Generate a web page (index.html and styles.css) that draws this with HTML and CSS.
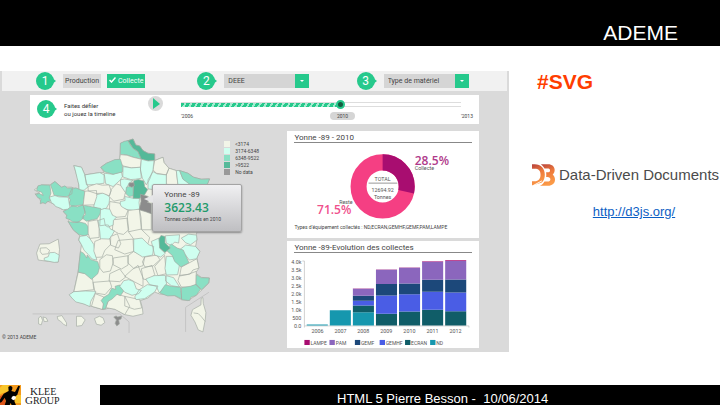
FILE: index.html
```html
<!DOCTYPE html>
<html lang="fr">
<head>
<meta charset="utf-8">
<meta name="viewport" content="width=device-width, initial-scale=1">
<title>ADEME</title>
<link rel="stylesheet" href="styles.css">
</head>
<body>
<header class="top"><h1>ADEME</h1></header>
<main class="content">
  <section class="dashboard">
    <div class="toolbar">
      <div class="group">
        <span class="badge">1</span>
        <button class="choice" type="button">Production</button>
        <button class="choice chosen" type="button"><svg class="tick" viewBox="0 0 14 12"><path d="M1 6l4 4 8-9"/></svg>Collecte</button>
      </div>
      <div class="group">
        <label class="badge" for="flux">2</label>
        <div class="picker"><select id="flux"><option>DEEE</option></select></div>
      </div>
      <div class="group">
        <label class="badge" for="type">3</label>
        <div class="picker"><select id="type"><option>Type de matériel</option></select></div>
      </div>
    </div>
    <div class="timeline">
      <span class="badge">4</span>
      <label class="hint" for="year">Faites défiler<br>ou jouez la timeline</label>
      <button class="play" type="button" aria-label="Lecture"><svg viewBox="0 0 15 15"><path d="M5 2l7 6-7 5z"/></svg></button>
      <div class="range">
        <input id="year" type="range" min="2006" max="2013" value="2010">
        <div class="ends"><span>'2006</span><output for="year">2010</output><span class="last">'2013</span></div>
      </div>
    </div>
    <div class="panels">
      <div class="mapbox">
        <svg class="map" viewBox="0 -15 864 681">
          <g class="dep">
            <path d="M362 40 385 32 400 27 408 45 420 48 430 62 445 70 465 72 465 92 490 82 493 98 508 115 530 122 540 122 565 130 582 142 605 148 630 147 622 165 610 240 590 315 592 330 588 350 600 365 592 385 598 415 588 430 605 443 630 445 628 460 608 480 590 497 565 513 545 510 525 498 480 493 465 487 445 505 422 513 428 535 430 553 400 560 375 555 350 540 330 535 310 540 275 530 228 515 210 497 222 485 235 425 242 365 245 345 236 330 240 318 220 300 205 275 210 268 190 245 208 238 185 238 160 222 145 215 125 220 118 205 105 192 120 190 103 180 125 165 150 165 165 155 185 172 215 172 238 180 235 150 222 107 245 112 255 135 300 128 313 128 303 112 320 100 360 88z"/>
            <path class="m" d="M362 40l12-6 11-2 6 12 9 11 15 10 10 23-25-6-18-7-20-1z"/>
            <path class="d" d="M385 32l15-5 8 18 12 3 10 14 15 8 20 2v20l-20 1-20-5-10-23-15-10z"/>
            <path d="M362 74l20 2 18 6 25 6-3 24-27 2-25-6-12-13zM465 92l25-10 3 16 15 17-8 20-30-5-10-10zM508 115l22 7 5 43-20 10-15-15v-25z"/>
            <path class="l" d="M370 110l25 4 27-2 3 33-18 3-14 1-24-8zM425 88l20 5 18-1-3 28-10 28-10 17-12-20-6-25zM445 150l15-25 12 7 28 3v50l-55-8zM530 122h10l10 25 25 15v30h-35l-5-27zM313 130l27 3 25-7 3 14-6 10-22 20-22-8zM255 135l45-7 13 7v25l-28 4-25 1zM222 107l23 5 10 23 5 24 5 12-12 10-15 1-1-17-5-20-6-25zM290 195l20-6 20 11-2 20-8 15-15 5-23-8 1-20zM362 150l12-3 26 5-12 8-6 12-4 18-15-18zM362 215l14-3-1-12 25 5 20-2-2 15 2 20-14 5-24-4-22-6z"/>
            <path class="m" d="M540 122l25 8 17 12 23 6 25-1-8 20-25-2-15 7-32-24zM303 112l17-12 25-11 17-1 6 20v18l-28 7-25-7zM380 172l20-4 2 30-14 2-10-9zM125 165l25 1 3 24-5 15 7 8-14 3-4 6-9-4-7 4 2-15-9-3-7-10 11-3 12 6-5-10-15-5 4-14zM152 165l13-10 20 17 10-4 8 7 15-1-2 18-16 9-20-2-17-2zM215 178l13-4 12 5 15 5-2 20-3 21-35 4-7-7 3-12-5-10zM190 245l17-9 8-8 18 3 17-6 6 21-6 14 2 4-17 14-17-2-8-6-12-5 3-9zM250 226l26 5 27 5-1 14-10 17-32 7-14-10 11-10zM205 275l18 3 14-2 20 5 8 10 1 23-13 4-15-3-18-15z"/>
            <path d="M265 170l25-8 18 4 20-1 6 18-5 15-20-8-20 1-24-8zM255 184l35-2 1 18-8 25-33 1zM335 178l15-16 12 4 15 22-5 20-30 6-14-14zM265 275l28-5 5 25v28l-28 3-5-15zM330 215l30 5 5 10 20 12-8 18-35 3-13-20zM386 242l33-4 5 25 2 37-18 6-22-1-4-35zM340 270l43-5 4 35-16 14-15-3-18-10zM419 238l36 12v50h-30z"/>
            <path class="l" d="M302 240l12-4 16 2 8 18 12 6-9 10-1 14-15 6-10-6-15 2 1-20zM148 202l17-5 12 4 28 1 5 30-6 6-14 2-9-5-14-5-5-7-7-4zM295 272l18-6 3 19 10 1 6 12 12 5-9 17-10 11-23-2-2-24zM240 320l20-3 10 9 12 18 3 20 6 27-14-3-12-14-12-12-8-17-8-14z"/>
            <path d="M285 335l20-8 25 1 3 16-18 18-8 20-18 1-7-19zM333 320l20-8 10 30-7 13-24-9zM300 390l20-15 18 3 2 22-8 24-22 4-10-13zM235 428l27 4 16 14 4 34-60 7zM280 458l50-4 6 18-20 23-30-5zM286 492l26 10-2 38-35-10zM335 490l40 10 15 30-15 25-30-16-27-5zM375 500l45 10 6 25-22 4-29-10zM435 382l36-6 10 14-21 19-24 3-8-15zM385 378l17-13 33 17-5 26-28 8-17-16zM465 410l30-33 5 55-25 6zM425 417l32-10 8 28-15 17-20-4zM375 440l22-20 18-13 15 38v25l-25-13zM330 432l30-14 18 24-18 14-32-2zM340 385l45-7v28l-20 12-25-13zM355 332l45-4 2 37-27 8-30-13zM386 306l38-8 26 25-6 22-42-17zM545 412l23-12 24-13 6 28-18 6-8 12-32 6zM540 437l25-3 25-9v40l-20 8-25-1-10-19z"/>
            <path class="m" d="M242 365l10 6 9 14 1-9 12 14 20 6 5 18-5 18-19 17-20-17-20-5zM312 503l15-9 9-18 12 3-2-9 14-4 12 18-10 14-10-4-15 14-13 8-7 22h-9l3-15-7-10z"/>
            <path class="l" d="M208 495l14-9 35-2 31 1-6 14-9 16-3 16-18-8-24-6-12-12zM360 470l12-17 15-3 15 6 8 22 15 4-8 10-20 5-22-9zM402 328l25-3 20 20 15 5-3 26-30 6-27-17zM455 335l23-10 4 32 15 14-14 11-18-6zM497 318l43-3-3 25-12-3-10 10-15-7zM545 325l22-12 24 3 1 15-19 14-15-6zM540 360l18-14 30 4 13 15-10 22-22 4-12-16zM500 380h19l12 18 9 6-6 31-34 1-4-20zM500 438l22 6 18 28-25-4-17-14zM438 448l25-10 34-1 4 28-22 25-9-20-20-5zM405 502l14-22 24-15 32 4-10 18-30 20-26 3z"/>
            <path class="m" d="M498 360l17-17 18 12 18 6 17 38-24 13-19-17-7-18zM480 490l17-25 18 5 28 3 3 35-20-10-22 1zM545 474l27-4 18-6 13 15-13 18-16 6-4 10-24-3zM590 435l15 9 24 1-2 15-21 20-17-15z"/>
            <path class="d" d="M478 327l6-10 12 3v19l16 16-16 13-16-13zM402 152l14-3 16 4 3 17 9 9-10 17-16 10-18-1z"/>
            <path class="g" d="M388 159l14-1 2 10-8 4-9-4zM422 193l21 6 12 8-12 10 12 4v31l-19-7-18-5 6-26z"/>
          </g>
          <g class="dep">
            <path d="M110 370l10-27 28-1 27-14 4 31-4 38-30-2-30-4zM605 505l5-1 1 17 8 28-2 22-7 36-14-6-10-24-12-20 5-17 25-14zM116 565l7-5 5 12-4 14-8-3zM129 562l10 3 5 10-11 1zM172 561l14-3 14 22 0 9-9-5-8-8-9-6zM230 560h15l11 11-10 17-16 2zM284 567l15-7 11 5 5 14-11 8-14-3z"/>
            <path d="M121 355l18-1 10 8-4 10-18 2-6-8zM582 550l14 2 10 10 11 14"/>
            <path class="l" d="M133 385l12-4 4-12 15-1 14 8-3 21-12 1-30-6z"/>
            <path class="g" d="M342 562l7-3 5 3 12-3-2 9-7 3 2 12-8 6-5-8 4-10z"/>
          </g>
          <path class="frame" d="M98 553h262l28 24v33M558 607v-74l70-45"/>
        </svg>
        <ul class="legend">
          <li class="k1">&lt;3174</li><li class="k2">3174-6348</li><li class="k3">6348-9522</li><li class="k4">&gt;9522</li><li class="k5">No data</li>
        </ul>
        <div class="tip"><b>Yonne -89</b><strong>3623.43</strong><small>Tonnes collectés en 2010</small></div>
        <p class="copy">© 2013 ADEME</p>
      </div>
      <div class="cards">
        <article class="card">
          <h2>Yonne -89 - 2010</h2>
          <svg class="chart" viewBox="24 57 573 240">
            <g class="ring"><circle cx="310" cy="187" r="72" class="rest"/><circle cx="310" cy="187" r="72" pathLength="100" class="part" transform="rotate(-90 310 187)"/></g>
            <path class="rule" d="M268 177h86"/>
            <g class="mid"><text x="310" y="171">TOTAL</text><text x="310" y="204">12694.92</text><text x="310" y="224">Tonnes</text></g>
            <text class="big purple" x="406" y="122">28.5%</text><text x="406" y="139">Collecte</text>
            <text x="180" y="239">Reste</text><text class="big pink" x="114" y="269">71.5%</text>
          </svg>
          <p class="types">Types d'équipement collectés : ND,ECRAN,GEMHF,GEMF,PAM,LAMPE</p>
        </article>
        <article class="card">
          <h2>Yonne -89-Evolution des collectes</h2>
          <svg class="chart" viewBox="24 62 573 275">
            <path class="axis" d="M70 86h6v194h492v5M76 280v5"/>
            <g class="ylab"><text x="67" y="95">4.0k</text><text x="67" y="119">3.5k</text><text x="67" y="142">3.0k</text><text x="67" y="166">2.5k</text><text x="67" y="190">2.0k</text><text x="67" y="214">1.5k</text><text x="67" y="238">1.0k</text><text x="67" y="261">500</text><text x="67" y="285">0.0</text></g>
            <g class="nd"><path d="M83 276h63v3H83zM152 233h63v46h-63zM221 239h63v40h-63z"/></g>
            <g class="ecran"><path d="M221 219h63v20h-63zM290 244h63v35h-63zM359 237h63v42h-63zM428 232h63v47h-63zM497 236h63v43h-63z"/></g>
            <g class="gemhf"><path d="M221 205h63v14h-63zM290 189h63v55h-63zM359 185h63v52h-63zM428 178h63v54h-63zM497 180h63v56h-63z"/></g>
            <g class="gemf"><path d="M221 190h63v15h-63zM290 155h63v34h-63zM359 153h63v32h-63zM428 142h63v36h-63zM497 141h63v39h-63z"/></g>
            <g class="pam"><path d="M221 169h63v21h-63zM290 112h63v43h-63zM359 106h63v47h-63zM428 88h63v54h-63zM497 86h63v55h-63z"/></g>
            <path class="lampe" d="M221 168h63v1h-63zM290 111h63v1h-63zM359 105h63v1h-63zM428 87h63v1h-63zM497 84h63v2h-63z"/>
            <g class="xlab"><text x="115" y="301">2006</text><text x="184" y="301">2007</text><text x="252" y="301">2008</text><text x="321" y="301">2009</text><text x="390" y="301">2010</text><text x="459" y="301">2011</text><text x="528" y="301">2012</text></g>
            <path class="lampe" d="M76 322h16v16H76z"/><path class="pam" d="M151 322h16v16h-16z"/><path class="gemf" d="M227 322h16v16h-16z"/><path class="gemhf" d="M301 322h16v16h-16z"/><path class="ecran" d="M377 322h16v16h-16z"/><path class="nd" d="M452 322h16v16h-16z"/>
            <g class="keys"><text x="94" y="336">LAMPE</text><text x="170" y="336">PAM</text><text x="245" y="336">GEMF</text><text x="319" y="336">GEMHF</text><text x="395" y="336">ECRAN</text><text x="470" y="336">ND</text></g>
          </svg>
        </article>
      </div>
    </div>
  </section>
  <aside class="side">
    <h2>#SVG</h2>
    <div class="d3">
      <svg viewBox="0 0 70 66">
        <defs><linearGradient id="warm" x1="0" y1="0" x2="0.3" y2="1"><stop offset="0" stop-color="#b5413c"/><stop offset=".5" stop-color="#ee7a3c"/><stop offset="1" stop-color="#fb9a47"/></linearGradient></defs>
        <path fill="url(#warm)" d="M0 0h8c20 0 31 14 31 32 0 10-3 18-9 24L2 65 0 66V52h8c12 0 18-8 18-20S20 14 8 14H0z"/>
        <path fill="url(#warm)" d="M27 0h22c12 0 20 7 20 18 0 6-3 11-6 14 4 3 7 8 7 15 0 12-9 19-21 19H24c7-3 11-7 14-13h9c6 0 9-3 9-7s-3-7-9-7h-4q1-7 0-14h4c5 0 8-2 8-6s-3-6-8-6h-9C35 8 32 4 27 0z"/>
        <path stroke="#fff" stroke-width="3" d="M0 67l30-16"/>
      </svg>
      <span>Data-Driven Documents</span>
    </div>
    <a href="http://d3js.org/">http://d3js.org/</a>
  </aside>
</main>
<footer class="bottom">
  <div class="klee">
    <svg viewBox="0 0 63 60"><path fill="#f39a1d" d="M0 0h63v60H0z"/><path fill="#f8c52c" d="M8 0h18v18L0 28V8zM42 30h21v24H46z"/><path fill="#dd5519" d="M0 34l14-8 4 34H0z"/><path d="M25 6q7-7 12 1 1 6-3 11l11 3 10-19 5 2-8 25-8 7-1 13 8 18H38l-6-13-8 16H11l7-22-4-10-9 13-5 2V44l11-18 15-8z"/><path fill="#fff" d="M36 35l6-3 6 4-2 7-6 3-6-5z"/></svg>
    <div class="name"><span>K<i>LEE</i></span><span>G<i>ROUP</i></span></div>
  </div>
  <p>HTML 5 Pierre Besson -&nbsp; 10/06/2014</p>
</footer>
</body>
</html>
```
FILE: styles.css
```css
* { box-sizing: border-box; margin: 0; padding: 0; }
body { min-height: 100vh; display: flex; flex-direction: column; background: #fff; font-family: "Liberation Sans", sans-serif; }
.top { background: #000; color: #fff; height: 46px; padding: 21px 42px 0; text-align: right; }
.top h1 { font-size: 21px; font-weight: 400; line-height: 24px; }
.content { flex: 1; display: grid; grid-template-columns: 509fr 211fr; align-items: start; padding-top: 25px; }

.dashboard { background: #dadada; color: #444; font-family: Roboto, sans-serif; font-size: 7px; line-height: 8px; }
button, select { font: inherit; color: inherit; border: 0; border-radius: 0; }
.toolbar { display: grid; grid-template-columns: 162fr 160fr 151fr; height: 20px; margin: 0 2px; padding-left: 34px; background: #f1f1f1; }
.group { display: flex; align-items: center; }
.badge { position: relative; flex: none; width: 18px; height: 18px; margin-right: 9px; border-radius: 50%; background: #26c98c; color: #fff; font-size: 12px; line-height: 18px; text-align: center; }
.badge::after { content: ""; position: absolute; left: 16px; top: 6px; border: solid transparent; border-width: 3px 0 3px 4px; border-left-color: #26c98c; }
.choice { height: 14px; padding: 0 2px; margin-right: 6px; background: #dadada; }
.chosen { background: #26c98c; color: #fff; }
.tick { width: 7px; height: 6px; margin-right: 2px; fill: none; stroke: #fff; stroke-width: 3; }
.picker { position: relative; flex: none; width: 85px; height: 14px; }
.picker select { display: block; width: 100%; height: 100%; padding: 0 4px; appearance: none; background: linear-gradient(to left, #26c98c 14px, #d5d5d5 14px); }
.picker::after { content: ""; position: absolute; right: 5px; top: 6px; border: 2px solid transparent; border-top-color: #fff; pointer-events: none; }

.timeline { display: flex; align-items: flex-start; height: 29px; margin: 4px 30px 0; padding: 0 18px 0 7px; background: #fff; }
.timeline .badge { margin-top: 5px; }
.hint { width: 84px; padding-top: 7px; font-size: 6px; color: #333; }
.play { width: 15px; height: 15px; margin: 1px 18px 0 0; border-radius: 50%; background: #dadada; }
.play svg { display: block; fill: #26c98c; }
.range { flex: 1; padding-top: 5px; }
.range input { display: block; width: 100%; height: 9px; appearance: none; background: linear-gradient(#fff, #fff) 100% 50% / 43% 3px no-repeat, repeating-linear-gradient(120deg, #26c98c 0 3px, #a5ecd0 3px 5px) 0 50% / 57% 4px no-repeat, linear-gradient(#ddd, #ddd) 0 50% / 100% 5px no-repeat; }
.range input::-webkit-slider-thumb { appearance: none; width: 9px; height: 9px; border: 2px solid #26c98c; border-radius: 50%; background: #145c40; }
.ends { display: grid; grid-template-columns: 149fr 25fr 106fr; font-size: 5px; padding-top: 3px; }
.ends output { border-radius: 4px; background: #d5d5d5; text-align: center; }
.ends .last { justify-self: end; margin-right: -12px; }

.panels { display: grid; grid-template-columns: 3fr 2fr; padding-right: 30px; }
.mapbox { position: relative; }
.map { display: block; width: 100%; margin-top: 1px; }
.dep path { fill: #f2f5e8; stroke: #a3aaa3; stroke-width: 2; stroke-linejoin: round; }
.dep .l { fill: #cffff0; }
.dep .m { fill: #89e0c4; }
.dep .d { fill: #55b999; }
.dep .g { fill: #8c8c8c; }
.frame { fill: none; stroke: #c4c4c4; stroke-width: 3; }
.legend { position: absolute; left: 78%; top: 17px; list-style: none; font-size: 5px; line-height: 7px; }
.legend li::before { content: ""; display: inline-block; width: 6px; height: 6px; margin-right: 5px; vertical-align: top; background: currentcolor; }
.k1::before { color: #f2f5e8; }
.k2::before { color: #cffff0; }
.k3::before { color: #89e0c4; }
.k4::before { color: #55b999; }
.k5::before { color: #999; }
.tip { position: absolute; left: 53%; top: 60px; width: 90px; height: 48px; padding: 5px 11px; border: 1px solid #a4a4a4; border-radius: 2px; background: linear-gradient(#f0f0f2, #bfbfc2); box-shadow: 0 1px 2px #888; white-space: nowrap; }
.tip::before { content: ""; position: absolute; left: -9px; top: 10px; border: solid transparent; border-width: 4px 9px 4px 0; border-right-color: #e6e6e8; }
.tip b, .tip strong, .tip small { display: block; }
.tip b { font-size: 8px; line-height: 10px; font-weight: 400; }
.tip strong { font: 600 12px/15px "Open Sans", sans-serif; color: #1f9a6b; }
.tip small { font-size: 5px; line-height: 8px; }
.copy { position: absolute; left: 2px; bottom: 11px; font-size: 5px; }

.cards { display: grid; gap: 3px; align-content: start; padding-top: 7px; }
.card { height: 107px; background: #fff; overflow: hidden; }
.card h2 { height: 12px; margin: 0 7px; padding-top: 2px; border-bottom: 1px solid #888; font-size: 8px; line-height: 10px; font-weight: 400; }
.chart { display: block; width: 100%; font-size: 16px; fill: #555; }
.ring { fill: none; stroke-width: 48; }
.rest { stroke: #f53f83; }
.part { stroke: #a80d70; stroke-dasharray: 28.5 71.5; }
.rule { stroke: #999; stroke-width: 3; }
.axis { fill: none; stroke: #bbb; stroke-width: 2; }
.mid, .xlab { text-anchor: middle; }
.ylab { text-anchor: end; }
.big { font: 600 36px "Open Sans", sans-serif; }
.purple { fill: #b03a8b; }
.pink { fill: #f0508c; }
.types { padding-left: 7px; font-size: 5px; white-space: nowrap; }
.keys { font-size: 15px; }
.nd { fill: #1697ae; }
.ecran { fill: #105d68; }
.gemhf { fill: #4a5de5; }
.gemf { fill: #1c487a; }
.pam { fill: #8b66bd; }
.lampe { fill: #a80d70; }

.side { display: flex; flex-direction: column; padding-left: 23px; }
.side h2 { padding-left: 5px; color: #ff3d00; font-size: 21px; line-height: 22px; }
.d3 { display: flex; align-items: center; gap: 4px; margin-top: 71px; color: #4b4b4b; font-size: 15px; line-height: 22px; white-space: nowrap; }
.d3 svg { flex: none; width: 23px; height: 22px; }
.side a { align-self: center; margin: 18px 0 0 16px; color: #0b5ec4; font-size: 13px; line-height: 16px; }

.bottom { display: grid; grid-template-columns: 100px 1fr; height: 20px; }
.bottom p { padding-left: 237px; background: #000; color: #fff; font-size: 13px; line-height: 27px; height: 20px; overflow: hidden; }
.klee { display: flex; gap: 4px; }
.klee svg { width: 21px; height: 20px; }
.name { font: 11px/8px "Liberation Serif", serif; color: #222; padding-top: 2px; }
.name span { display: block; }
.name span:first-child { padding-left: 5px; }
.name i { font-size: 10px; font-style: normal; }
```
